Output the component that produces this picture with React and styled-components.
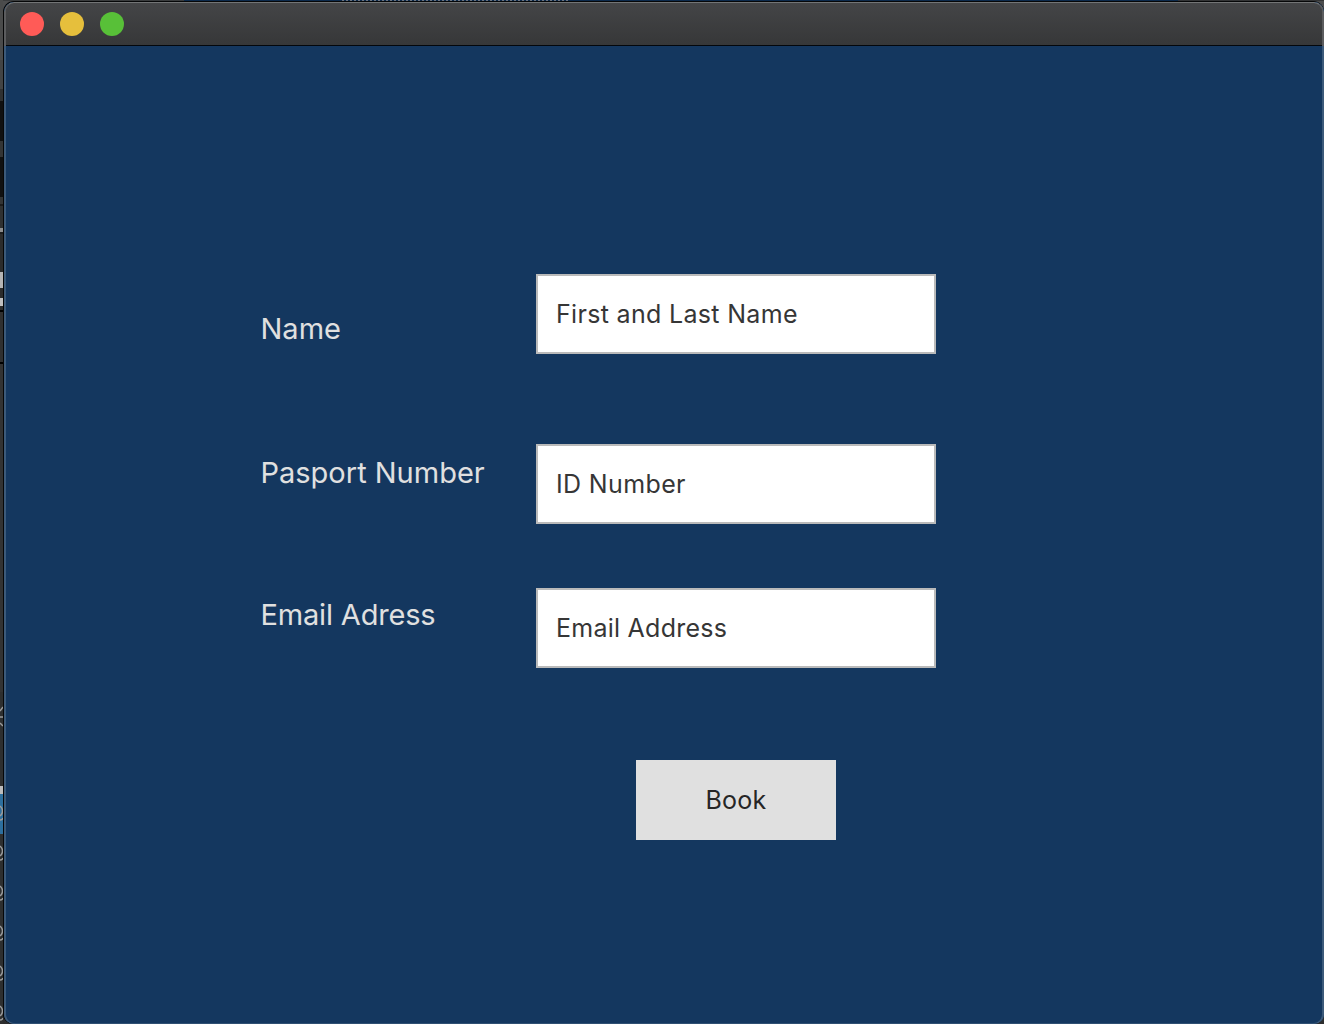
import React from "react";
import styled, { createGlobalStyle } from "styled-components";

const GlobalStyle = createGlobalStyle`
  * { box-sizing: border-box; }
  body { margin: 0; background: #333; font-family: Inter, "Liberation Sans", sans-serif; }
`;

const Desktop = styled.div`
  display: grid;
  grid-template-columns: 3px 1321px;
  width: 1324px;
  height: 1024px;
  overflow: hidden;
  background: linear-gradient(#4c4d4e 0, #4c4d4e 60px, #2c2d2e 60px);
`;

const Sliver = styled.div`
  display: flex;
  flex-direction: column;
  overflow: hidden;
`;

const Band = styled.div`
  flex: none;
  height: ${(p) => p.$h}px;
  background: ${(p) => p.$c};
`;

const ListEdge = styled.svg`
  display: block;
  flex: none;
  background: #2e2f2f;
`;

const Stage = styled.div`
  display: flex;
  flex-direction: column;
`;

const TopStrip = styled.div`
  display: flex;
  flex: none;
  height: 1px;
  background: #333435;
`;

const StripPart = styled.span`
  width: ${(p) => p.$w}px;
  background: ${(p) => p.$bg};
`;

const Frame = styled.div`
  flex: none;
  height: 1023px;
  border: 1px solid #060708;
  border-bottom: 0;
  border-right: 0;
  border-radius: 11px 11px 10px 10px;
  background: #060708;
`;

const Window = styled.main`
  display: flex;
  flex-direction: column;
  height: 1022px;
  border-radius: 10px;
  overflow: hidden;
  background: #14375f;
  box-shadow: inset 2px 0 #3c5a7a, inset -2px 0 #3c5a7a, inset 0 -1px #2f4f72;
`;

const TitleBar = styled.header`
  display: flex;
  flex: none;
  align-items: center;
  gap: 16px;
  height: 44px;
  padding: 0 0 1px 14px;
  border: solid #5b5c5e;
  border-width: 1px 2px 0 2px;
  border-top-color: #737576;
  border-radius: 10px 10px 0 0;
  background: linear-gradient(#444547, #363738);
  box-shadow: inset 0 -1px #03070c;
`;

const Light = styled.span`
  width: 24px;
  height: 24px;
  margin-bottom: 1px;
  border-radius: 50%;
  background: ${(p) => p.$color};
`;

const Form = styled.form`
  display: flex;
  flex-direction: column;
  width: 676px;
  margin: 228px 0 0 256px;
`;

const Row = styled.div`
  display: flex;
  justify-content: space-between;
  height: 80px;
  margin-bottom: ${(p) => p.$after}px;
`;

const Label = styled.label`
  padding: ${(p) => p.$drop}px 0 0 0.5px;
  color: #e0e0e0;
  font-size: 29px;
  line-height: 36px;
  letter-spacing: ${(p) => p.$track}px;
  white-space: nowrap;
`;

const Input = styled.input`
  width: 400px;
  height: 80px;
  padding: 0 18px;
  border: 2px solid #bababa;
  border-radius: 0;
  outline: 0;
  background: #fff;
  color: #363636;
  font: 400 25px Inter, sans-serif;
  letter-spacing: ${(p) => p.$track}px;
`;

const BookButton = styled.button`
  align-self: flex-end;
  width: 200px;
  height: 80px;
  margin-right: 100px;
  padding: 0;
  border: 0;
  background: #e0e0e0;
  color: #262626;
  font: 400 25px Inter, sans-serif;
  letter-spacing: 0.25px;
`;

const bands = [
  [60, "#4a4b4b"], [29, "#434444"], [12, "#303131"], [40, "#111"], [16, "#343535"],
  [40, "#111"], [7, "#343535"], [2, "#1c1c1c"], [22, "#303131"], [4, "#8e8e8e"],
  [2, "#1c1c1c"], [38, "#2c2c2c"], [16, "#b5b5b5"], [10, "#2c2c2c"], [8, "#c0c0c0"],
  [4, "#2c2c2c"], [2, "#000"], [50, "#303030"], [2, "#000"], [328, "#333"],
];

const listRows = [113, 153, 193, 233, 273, 313];

const fields = [
  { id: "name", label: "Name", value: "First and Last Name", drop: 37, after: 90, labelTrack: 0, track: 0.32 },
  { id: "passport", label: "Pasport Number", value: "ID Number", drop: 11, after: 64, labelTrack: 0, track: 0.36 },
  { id: "email", label: "Email Adress", value: "Email Address", drop: 9, after: 92, labelTrack: -0.17, track: 0.25 },
];

export default function App() {
  return (
    <>
      <GlobalStyle />
      <Desktop>
        <Sliver>
          {bands.map(([h, c], i) => <Band key={i} $h={h} $c={c} />)}
          <ListEdge width="3" height="332" viewBox="0 0 3 332" fill="none" stroke="#9a9a9a">
            <path d="M0 19 3 15M0 25h3M0 31l3 3" strokeWidth="1.5" />
            <path d="M0 94h3v8H0z" fill="#bcbcbc" stroke="none" />
            <path d="M0 102h3v40H0z" fill="#2d6f9e" stroke="none" />
            {listRows.map((y) => (
              <path
                key={y}
                d={`M0 ${y + 1}q2.5 2 2.5 5t-2.5 5M0 ${y + 15}q2 0 3-2`}
                strokeWidth="1.5"
              />
            ))}
          </ListEdge>
        </Sliver>
        <Stage>
          <TopStrip>
            <StripPart $w={181} $bg="#3a3c3d" />
            <StripPart $w={158} $bg="#0c2a4c" />
            <StripPart $w={228} $bg="repeating-linear-gradient(90deg, #6c7480 0 2px, #0c2a4c 2px 4px)" />
            <StripPart $w={608} $bg="#0c2a4c" />
          </TopStrip>
          <Frame>
            <Window>
              <TitleBar>
                <Light $color="#ff5b57" />
                <Light $color="#e6bf3c" />
                <Light $color="#58c038" />
              </TitleBar>
              <Form>
                {fields.map((f) => (
                  <Row key={f.id} $after={f.after}>
                    <Label htmlFor={f.id} $drop={f.drop} $track={f.labelTrack}>{f.label}</Label>
                    <Input id={f.id} defaultValue={f.value} $track={f.track} />
                  </Row>
                ))}
                <BookButton type="button">Book</BookButton>
              </Form>
            </Window>
          </Frame>
        </Stage>
      </Desktop>
    </>
  );
}
